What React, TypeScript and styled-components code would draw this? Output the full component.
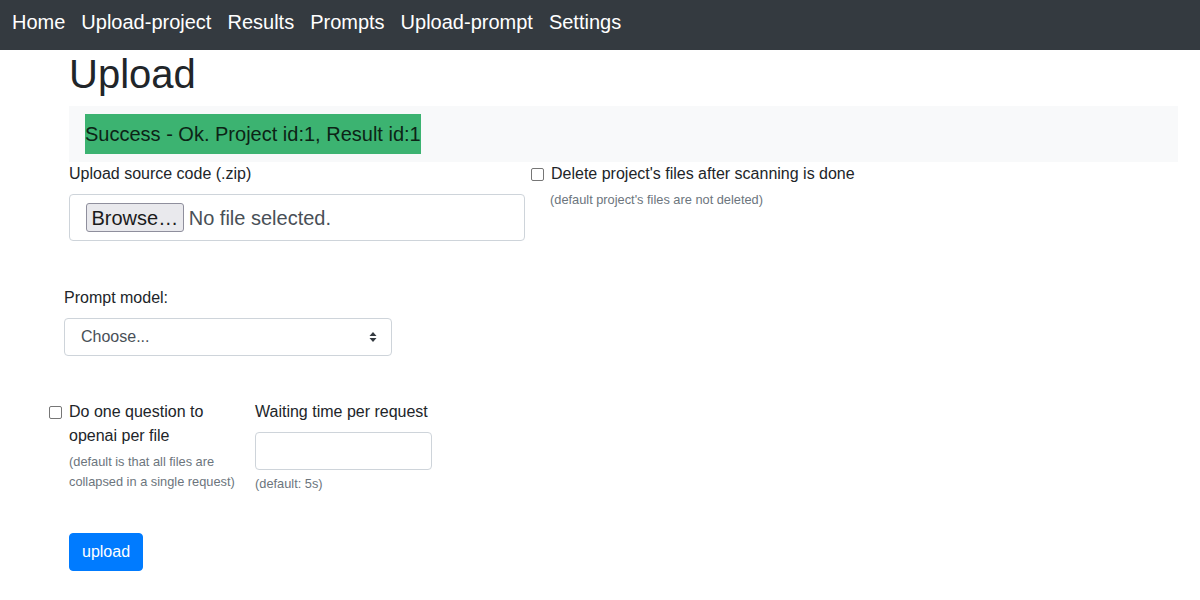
import React from "react";
import styled, { createGlobalStyle } from "styled-components";

const GlobalStyle = createGlobalStyle`
    body {
        margin: 0;
        font-family: "Liberation Sans", Arial, sans-serif;
        font-size: 16px;
        line-height: 1.5;
        color: #212529;
        background: #fff;
    }
    * { box-sizing: border-box; }
`

const NavBar = styled.nav`
    height: 50px;
    background: #343a40;
    display: flex;
    align-items: center;
    padding: 0 4px 6px;
`

const NavLink = styled.a`
    color: #fff;
    font-size: 20px;
    line-height: 24px;
    padding: 0 8px;
    text-decoration: none;
`

const Main = styled.main`
    padding: 0 22px 0 69px;
`

const Title = styled.h1`
    margin: 0 0 8px;
    font-size: 40px;
    font-weight: 400;
    line-height: 1.2;
`

const Banner = styled.div`
    background: #f8f9fa;
    padding: 8px 16px;
`

const Success = styled.span`
    display: inline-block;
    background: #3cb371;
    color: #0c2416;
    font-size: 20px;
    line-height: 24px;
    padding: 8px 0;
`

const Row = styled.div<{ $shift?: number; $mt?: number }>`
    display: flex;
    align-items: flex-start;
    margin-left: ${(p) => p.$shift || 0}px;
    margin-top: ${(p) => p.$mt || 0}px;
`

const Col = styled.div<{ $w?: number }>`
    width: ${(p) => (p.$w ? p.$w + "px" : "auto")};
    flex: ${(p) => (p.$w ? "none" : "1")};
`

const Label = styled.label`
    display: block;
    margin-bottom: 8px;
    line-height: 24px;
`

const FileBox = styled.div`
    height: 47px;
    border: 1px solid #ced4da;
    border-radius: 4px;
    display: flex;
    align-items: center;
    padding: 0 16px;
    gap: 5px;
    font-size: 20px;
    color: #495057;
`

const Browse = styled.span`
    display: inline-flex;
    align-items: center;
    height: 29px;
    padding: 0 4.5px;
    background: #e9e9ed;
    border: 1px solid #8f8f9d;
    border-radius: 3px;
    color: #1b1b1b;
    font-size: 20px;
`

const Check = styled.span`
    flex: none;
    width: 13px;
    height: 13px;
    border: 1px solid #767676;
    border-radius: 2px;
    margin-top: 6px;
    margin-right: 7px;
`

const CheckLine = styled.div`
    display: flex;
    align-items: flex-start;
    line-height: 24px;
`

const Hint = styled.small<{ $indent?: number }>`
    display: block;
    margin-top: 4px;
    margin-left: ${(p) => p.$indent || 0}px;
    font-size: 12.8px;
    line-height: 19.5px;
    color: #6c757d;
`

const Select = styled.div`
    width: 328px;
    height: 38px;
    border: 1px solid #ced4da;
    border-radius: 4px;
    display: flex;
    align-items: center;
    justify-content: space-between;
    padding: 0 14px 0 16px;
    color: #495057;
`

const TextInput = styled.div`
    width: 177px;
    height: 38px;
    border: 1px solid #ced4da;
    border-radius: 4px;
`

const Button = styled.button`
    margin-top: 39px;
    background: #007bff;
    color: #fff;
    border: 1px solid #007bff;
    border-radius: 4px;
    font-family: inherit;
    font-size: 16px;
    line-height: 24px;
    padding: 6px 12px;
`

function Arrows() {
    return (
        <svg width="8" height="10" viewBox="0 0 8 10">
            <path d="M4 0 L7.5 4 H0.5 Z M4 10 L0.5 6 H7.5 Z" fill="#343a40" />
        </svg>
    )
}

export default function App() {
    const links = ["Home", "Upload-project", "Results", "Prompts", "Upload-prompt", "Settings"]
    return (
        <>
            <GlobalStyle />
            <NavBar>
                {links.map((l) => (
                    <NavLink key={l} href="#">{l}</NavLink>
                ))}
            </NavBar>
            <Main>
                <Title>Upload</Title>
                <Banner>
                    <Success>Success - Ok. Project id:1, Result id:1</Success>
                </Banner>
                <Row>
                    <Col $w={456}>
                        <Label>Upload source code (.zip)</Label>
                        <FileBox>
                            <Browse>Browse…</Browse>
                            <span>No file selected.</span>
                        </FileBox>
                    </Col>
                    <Col style={{ marginLeft: 6 }}>
                        <CheckLine>
                            <Check />
                            <span>Delete project's files after scanning is done</span>
                        </CheckLine>
                        <Hint $indent={19}>(default project's files are not deleted)</Hint>
                    </Col>
                </Row>
                <Row $shift={-5} $mt={45}>
                    <Col>
                        <Label>Prompt model:</Label>
                        <Select>
                            <span>Choose...</span>
                            <Arrows />
                        </Select>
                    </Col>
                </Row>
                <Row $shift={-20} $mt={44}>
                    <Col $w={206}>
                        <CheckLine>
                            <Check />
                            <span>Do one question to openai per file</span>
                        </CheckLine>
                        <Hint $indent={20}>(default is that all files are collapsed in a single request)</Hint>
                    </Col>
                    <Col>
                        <Label>Waiting time per request</Label>
                        <TextInput />
                        <Hint>(default: 5s)</Hint>
                    </Col>
                </Row>
                <Button>upload</Button>
            </Main>
        </>
    )
}
